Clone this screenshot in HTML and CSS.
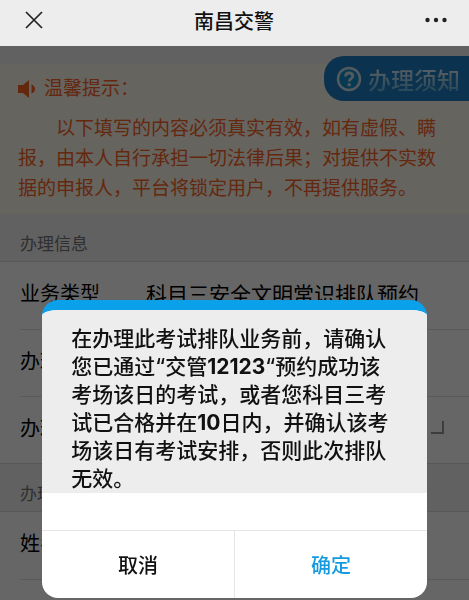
FILE: index.html
```html
<!DOCTYPE html>
<html lang="zh-CN">
<head>
    <meta charset="UTF-8">
    <meta name="viewport" content="width=device-width, initial-scale=1.0">
    <title>南昌交警</title>
    <link rel="stylesheet" href="styles.css">
</head>
<body>
    <header class="navbar">
        <button class="nav-btn" aria-label="关闭">
            <svg width="18" height="18" viewBox="0 0 18 18"><path d="M1 1L17 17M17 1L1 17" fill="none" stroke="#222" stroke-width="1.7"/></svg>
        </button>
        <h1 class="nav-title">南昌交警</h1>
        <button class="nav-btn" aria-label="更多">
            <svg width="22" height="6" viewBox="0 0 22 6" fill="#222"><circle cx="2.5" cy="3" r="2.2"/><circle cx="11" cy="3" r="2.2"/><circle cx="19.5" cy="3" r="2.2"/></svg>
        </button>
    </header>
    <main class="page">
        <section class="notice">
            <h2 class="notice-title">
                <svg width="18" height="18" viewBox="0 0 18 18" fill="currentColor"><path d="M0 5H5L11 0V18L5 13H0Z"/><path d="M13.5 4.500Q17 6 17 9T13.500 13.500Z"/></svg>
                温馨提示：
            </h2>
            <p class="notice-text">以下填写的内容必须真实有效，如有虚假、瞒<br>报，由本人自行承担一切法律后果；对提供不实数<br>据的申报人，平台将锁定用户，不再提供服务。</p>
        </section>
        <a href="#" class="guide">
            <svg width="26" height="26" viewBox="0 0 26 26" fill="none"><circle cx="13" cy="13" r="11" fill="#1590cc" stroke="#cfe0ea" stroke-width="2.5"/><path d="M9.5 10.5C9.5 8.3 11 7 13.1 7S16.8 8.3 16.8 10.2C16.8 12.6 13.2 12.7 13.2 15.5" stroke="#cfe0ea" stroke-width="2.8"/><circle cx="13.2" cy="18.7" r="1.7" fill="#cfe0ea"/></svg>
            <span class="guide-text">办理须知</span>
        </a>
        <h3 class="group-title">办理信息</h3>
        <dl class="group">
            <div class="row"><dt>业务类型</dt><dd>科目三安全文明常识排队预约</dd></div>
            <div class="row"><dt>办理</dt><dd></dd></div>
            <div class="row"><dt>办理</dt><dd class="corner"></dd></div>
        </dl>
        <h3 class="group-title">办理</h3>
        <dl class="group">
            <div class="row"><dt>姓名</dt><dd></dd></div>
            <div class="row"></div>
        </dl>
    </main>
    <div class="mask">
        <div class="dialog" role="dialog" aria-modal="true" aria-describedby="message">
            <p class="message" id="message">在办理此考试排队业务前，请确认<br>您已通过“交管<b>12123</b>“预约成功该<br>考场该日的考试，或者您科目三考<br>试已合格并在<b>10</b>日内，并确认该考<br>场该日有考试安排，否则此次排队<br>无效。</p>
            <div class="buttons">
                <button class="btn">取消</button>
                <button class="btn btn-ok">确定</button>
            </div>
        </div>
    </div>
</body>
</html>
```

FILE: styles.css
```css
* {
    box-sizing: border-box;
}
body {
    margin: 0;
    height: 100vh;
    display: flex;
    flex-direction: column;
    overflow: hidden;
    background: #f2f2f2;
    color: #000;
    font-family: Inter, "Noto Sans CJK SC", sans-serif;
    font-size: 21px;
}
h1, h2, h3, p, dl, dd {
    margin: 0;
    font-weight: 400;
}
button {
    border: none;
    padding: 0;
    background: none;
    font: inherit;
    cursor: pointer;
}
svg {
    display: block;
}
.navbar {
    position: relative;
    z-index: 2;
    flex: none;
    display: flex;
    align-items: center;
    justify-content: space-between;
    height: 46px;
    padding: 0 22px 6px 25px;
    background: #ededed;
}
.nav-btn {
    display: flex;
}
.nav-title {
    color: #111;
    font-size: 20px;
    font-weight: 500;
}
.page {
    position: relative;
    flex: 1;
    min-height: 0;
    overflow: hidden;
    padding-top: 18px;
}
.notice {
    padding: 10px 18px;
    background: #fffaee;
    color: #fb6426;
    font-size: 19px;
    line-height: 30px;
    white-space: nowrap;
}
.notice-title {
    display: flex;
    align-items: center;
    gap: 8px;
    font-size: 19px;
    margin-bottom: 10px;
}
.notice-text {
    text-indent: 2em;
}
.guide {
    position: absolute;
    top: 10px;
    right: 0;
    display: flex;
    align-items: center;
    gap: 6px;
    height: 45px;
    padding: 0 9px 0 12px;
    border-radius: 20px 0 0 20px;
    background: #1c7ec2;
    text-decoration: none;
}
.guide-text {
    font-size: 23px;
    font-weight: 500;
    background: linear-gradient(#fff, #4fa8d8);
    background-clip: text;
    color: transparent;
}
.group-title {
    height: 47px;
    padding: 6px 20px 0;
    color: #777;
    font-size: 17px;
    line-height: 48px;
}
.group {
    padding-left: 20px;
    background: #fff;
    border-top: 1px solid #ddd;
    border-bottom: 1px solid #ddd;
}
.row {
    display: flex;
    align-items: center;
    height: 67px;
    padding: 0 25px 6px 0;
    white-space: nowrap;
}
.row + .row {
    border-top: 1px solid #e2e2e2;
}
.row dt {
    width: 126px;
    font-size: 20px;
}
.row .corner {
    width: 13px;
    height: 13px;
    margin-left: auto;
    border: solid #999;
    border-width: 0 2px 2px 0;
}
.mask {
    position: fixed;
    inset: 0;
    z-index: 1;
    padding-top: 300px;
    background: rgba(0, 0, 0, 0.6);
}
.dialog {
    width: 82%;
    margin: 0 auto;
    overflow: hidden;
    border-top: 10px solid #0aa0ea;
    border-radius: 16px;
    background: #fff;
}
.message {
    padding: 15px 0 0 29px;
    background: #ededed;
    color: #111;
    font-weight: 500;
    line-height: 28px;
    white-space: nowrap;
}
.message b {
    font-weight: 700;
}
.buttons {
    display: flex;
    margin-top: 37px;
    border-top: 1px solid #e6e6e6;
}
.btn {
    flex: 1;
    height: 67px;
    color: #111;
    font-size: 20px;
    font-weight: 500;
}
.btn-ok {
    border-left: 1px solid #e6e6e6;
    color: #149bdf;
}
```
